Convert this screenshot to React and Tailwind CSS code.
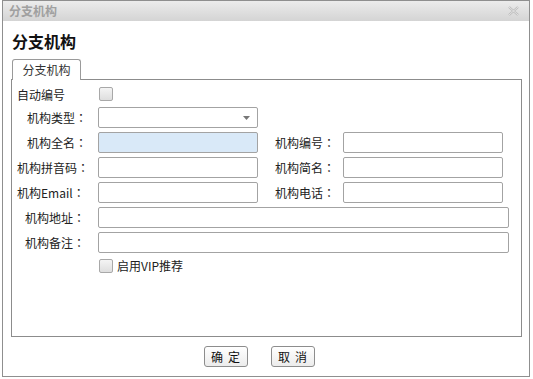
const font = { fontFamily: '"Noto Sans CJK SC", "Noto Sans", sans-serif' };
const colonFont = { fontFamily: '"Noto Sans CJK TC", "Noto Sans CJK SC", sans-serif' };

function Field({ width, blue, select }) {
  return (
    <div
      className={`relative h-[21px] shrink-0 rounded-[2px] border border-[#a3a3a3] ${
        blue ? "bg-[#d9e9f8]" : "bg-white"
      }`}
      style={{ width }}
    >
      {select && (
        <svg className="absolute right-[7px] top-[8px]" width="7" height="4" viewBox="0 0 7 4">
          <path d="M0 0 H7 L3.5 4 Z" fill="#777" />
        </svg>
      )}
    </div>
  );
}

function Check() {
  return (
    <div className="h-[14px] w-[14px] shrink-0 rounded-[2px] border border-[#a8a8a8] bg-gradient-to-b from-[#f4f4f4] to-[#dedede]" />
  );
}

function Label({ children, colon, className = "" }) {
  return (
    <div className={`shrink-0 text-[12px] leading-[21px] text-[#222] ${className}`}>
      {children}
      {colon && <span style={colonFont}>：</span>}
    </div>
  );
}

const pairRows = [
  { left: "机构全名", right: "机构编号", blue: true, lpad: "pl-[10px]" },
  { left: "机构拼音码", right: "机构简名", lpad: "pl-0" },
  { left: "机构Email", right: "机构电话", lpad: "pl-0" },
];

export default function App() {
  return (
    <div className="h-[379px] w-[533px] overflow-hidden bg-white" style={font}>
      <div className="ml-[2px] flex h-[377px] w-[528px] flex-col border border-[#8f8f8f] bg-white">
        {/* title bar */}
        <div className="flex h-[20px] shrink-0 items-center justify-between bg-gradient-to-b from-[#ececec] to-[#d4d4d4] pl-[6px] pr-[10px]">
          <span className="text-[12px] font-semibold text-[#a0a0a0]">分支机构</span>
          <svg width="11" height="10" viewBox="0 0 11 10">
            <path d="M1 1 L10 9 M10 1 L1 9" stroke="#b9b9b9" strokeWidth="2.2" />
            <path d="M1 1 L10 9 M10 1 L1 9" stroke="#efefef" strokeWidth="0.8" />
          </svg>
        </div>

        <div className="mt-[8px] pl-[9px] text-[16px] font-bold leading-[24px] text-[#111]">分支机构</div>

        {/* tab */}
        <div className="mt-[6px] flex pl-[9px]">
          <div className="relative z-10 -mb-px h-[21px] w-[69px] rounded-t-[3px] border border-b-0 border-[#9a9a9a] bg-white text-center text-[12px] leading-[20px] text-[#333]">
            分支机构
          </div>
        </div>

        {/* panel */}
        <div className="ml-[8px] flex h-[258px] w-[511px] flex-col border border-[#8c8c8c] pl-[5px] pt-[4px]">
          <div className="flex h-[20px] items-center">
            <Label className="w-[82px]">自动编号</Label>
            <Check />
          </div>

          <div className="mt-[3px] flex items-center">
            <Label colon className="w-[81px] pl-[10px]">机构类型</Label>
            <Field width={160} select />
          </div>

          {pairRows.map((r) => (
            <div key={r.left} className="mt-[4px] flex items-center">
              <Label colon className={`w-[81px] ${r.lpad}`}>{r.left}</Label>
              <Field width={160} blue={r.blue} />
              <Label colon className="w-[85px] pl-[17px]">{r.right}</Label>
              <Field width={160} />
            </div>
          ))}

          {["机构地址", "机构备注"].map((t) => (
            <div key={t} className="mt-[4px] flex items-center">
              <Label colon className="w-[81px] pl-[8px]">{t}</Label>
              <Field width={411} />
            </div>
          ))}

          <div className="mt-[3px] flex h-[20px] items-center pl-[82px]">
            <Check />
            <span className="ml-[4px] text-[12px] text-[#222]">启用VIP推荐</span>
          </div>
        </div>

        {/* buttons */}
        <div className="mt-[9px] flex justify-center gap-[23px] pr-[14px]">
          {["确定", "取消"].map((t) => (
            <button
              key={t}
              className="h-[21px] w-[44px] rounded-[3px] border border-[#8d8d8d] bg-gradient-to-b from-white to-[#ececec] pl-[5px] text-[12px] leading-[19px] tracking-[5px] text-[#111]"
            >
              {t}
            </button>
          ))}
        </div>
      </div>
    </div>
  );
}
